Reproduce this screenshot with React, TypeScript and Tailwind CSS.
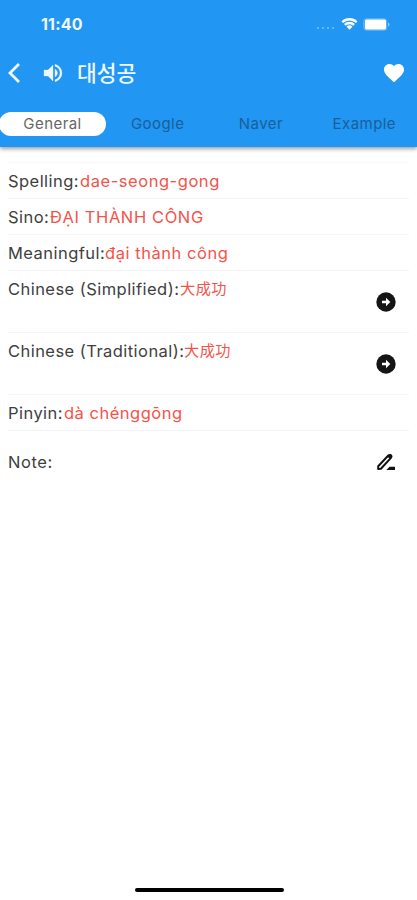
import React from "react";

type Entry = {
  label: string;
  value: string;
  height: string;
  link?: boolean;
  labelClass: string;
  valueClass: string;
};

const entries: Entry[] = [
  { label: "Spelling:", value: "dae-seong-gong", height: "h-9", labelClass: "w-[72px]", valueClass: "tracking-[0.55px]" },
  { label: "Sino:", value: "ĐẠI THÀNH CÔNG", height: "h-9", labelClass: "w-[42px]", valueClass: "tracking-[0.6px]" },
  { label: "Meaningful:", value: "đại thành công", height: "h-9", labelClass: "w-[97px]", valueClass: "tracking-[0.55px]" },
  { label: "Chinese (Simplified):", value: "大成功", height: "h-[62px]", link: true, labelClass: "w-[172px]", valueClass: "text-[15.2px]" },
  { label: "Chinese (Traditional):", value: "大成功", height: "h-[62px]", link: true, labelClass: "w-[176px]", valueClass: "text-[15.2px]" },
  { label: "Pinyin:", value: "dà chénggōng", height: "h-9", labelClass: "w-[56px]", valueClass: "tracking-[0.5px]" },
];

const tabs = ["General", "Google", "Naver", "Example"];

function StatusBar() {
  return (
    <div className="flex h-12 items-center justify-between pl-[41px] pr-[26px]">
      <span className="text-[16px] font-bold leading-5 tracking-[0.2px] text-[#eef7ff]">11:40</span>
      <div className="flex items-center">
        <div className="mr-[7px] mt-[8px] flex gap-[3px]">
          {[0, 1, 2, 3].map((i) => (
            <span key={i} className="h-[2px] w-[2px] rounded-full bg-white/40" />
          ))}
        </div>
        <svg width="17" height="14" viewBox="0 0 17 14" fill="#fff">
          <path d="M.5 4.4a11.3 11.3 0 0 1 16 0l-1.6 1.7a9 9 0 0 0-12.8 0z" />
          <path d="M3 7a7.8 7.8 0 0 1 11 0l-1.7 1.7a5.4 5.4 0 0 0-7.6 0z" />
          <path d="M5.6 9.7a4.1 4.1 0 0 1 5.8 0l-2.9 3z" />
        </svg>
        <svg className="ml-[5px] mr-px" width="27" height="13" viewBox="0 0 27 13">
          <rect x=".5" y=".5" width="23.5" height="12" rx="3" fill="#fff" fillOpacity=".2" stroke="#fff" strokeOpacity=".15" />
          <rect x="2" y="1.5" width="21" height="10" rx="1.5" fill="#fff" />
          <path d="M25 4.5q1.5.5 1.5 2T25 8.5z" fill="#fff" fillOpacity=".5" />
        </svg>
      </div>
    </div>
  );
}

function Header() {
  return (
    <header className="h-[147px] bg-[#2196f3] shadow-[0_2px_4px_rgba(0,0,0,0.38)]">
      <StatusBar />
      <div className="flex h-[50px] items-center pl-[7px] pr-[11px]">
        <svg width="15" height="22" viewBox="0 0 15 22" fill="none" stroke="#f2f9ff" strokeWidth="2.8">
          <path d="M12 2 3 11l9 9" />
        </svg>
        <svg className="ml-[19px]" width="24" height="24" viewBox="0 0 24 24" fill="#eef7ff" stroke="#eef7ff" strokeWidth=".3">
          <path d="M3 9v6h4l5 5V4L7 9H3zm13.5 3A4.5 4.5 0 0 0 14 7.970v8.050A4.470 4.470 0 0 0 16.500 12zM14 3.230v2.060a7 7 0 0 1 0 13.420v2.060a9 9 0 0 0 0-17.540z" />
        </svg>
        <h1 className="-mt-px ml-[12px] text-[21.5px] font-medium leading-7 text-[#eef7ff]">대성공</h1>
        <svg className="ml-auto" width="24" height="24" viewBox="0 0 24 24" fill="#fff">
          <path d="m12 21.350-1.450-1.320C5.400 15.360 2 12.280 2 8.500 2 5.420 4.420 3 7.500 3c1.740 0 3.410.810 4.500 2.090C13.090 3.810 14.760 3 16.500 3 19.580 3 22 5.420 22 8.500c0 3.780-3.400 6.860-8.550 11.540z" />
        </svg>
      </div>
      <nav className="-ml-px flex h-[49px] items-center pr-px">
        {tabs.map((tab, i) => (
          <button
            key={tab}
            className={`mt-[2px] h-6 rounded-full text-[15px] leading-[23px] tracking-[0.45px] ${i === 0 ? "w-[107px] bg-white text-[#666]" : "flex-1 text-[#1a5f98]"}`}
          >
            {tab}
          </button>
        ))}
      </nav>
    </header>
  );
}

function EntryRow({ entry }: { entry: Entry }) {
  return (
    <div className={`flex justify-between border-b border-[#f5f5f5] ${entry.height}`}>
      <p className="flex whitespace-nowrap pt-[7px] text-[16.5px] leading-[22px] tracking-[0.45px]">
        <span className={`text-[#404040] ${entry.labelClass}`}>{entry.label}</span>
        <span className={`text-[#f4534a] ${entry.valueClass}`}>{entry.value}</span>
      </p>
      {entry.link && (
        <svg className="mr-[11px] mt-[19px]" width="24" height="24" viewBox="0 0 24 24">
          <circle cx="12" cy="12" r="9.700" fill="#151515" />
          <path d="M8 10.800h4V7.700l4.300 4.300-4.300 4.300v-3.100H8z" fill="#fff" />
        </svg>
      )}
    </div>
  );
}

export default function App() {
  return (
    <div className="flex h-[900px] w-[417px] flex-col overflow-hidden bg-white font-['Inter','Noto_Sans_CJK_KR',sans-serif]">
      <Header />
      <main className="flex-1 px-2 pt-[15px]">
        <div className="border-t border-[#f9f9f9]">
          {entries.map((entry) => (
            <EntryRow key={entry.label} entry={entry} />
          ))}
        </div>
        <div className="mt-[19px] flex items-center justify-between">
          <p className="text-[16.5px] leading-6 tracking-[0.6px] text-[#404040]">Note:</p>
          <svg className="mr-[11px]" width="24" height="24" viewBox="0 0 24 24">
            <path d="M4.200 16.200 14.300 5.500q1.200-1.100 2.400 0t0 2.600L6.900 18.700l-2.700.300z" fill="none" stroke="#111" strokeWidth="2" strokeLinejoin="round" />
            <path d="m13 6.500 2.800-2.300q.8-.5 1.700.3l.7.900q.6.900-.2 1.700l-1.700 1.800z" fill="#111" />
            <path d="m12.300 20 3.300-3.300H21V20z" fill="#111" />
          </svg>
        </div>
      </main>
      <div className="mx-auto mb-2 h-1 w-[149px] translate-x-px rounded-full bg-black" />
    </div>
  );
}
